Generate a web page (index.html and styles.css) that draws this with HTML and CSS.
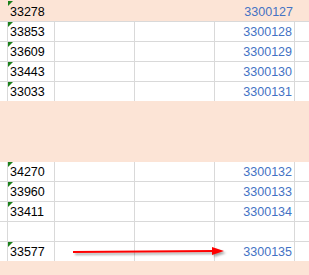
FILE: index.html
```html
<!DOCTYPE html>
<html>
<head>
<meta charset="utf-8">
<link rel="stylesheet" href="styles.css">
</head>
<body>
<div class="sheet">
  <div class="row peach first">
    <div class="cell"></div>
    <div class="cell id"><span class="flag"></span>33278</div>
    <div class="cell"></div>
    <div class="cell"></div>
    <div class="cell num">3300127</div>
    <div class="cell"></div>
  </div>
  <div class="block top">
    <div class="row grid"><div class="cell"></div><div class="cell id"><span class="flag"></span>33853</div><div class="cell"></div><div class="cell"></div><div class="cell num">3300128</div><div class="cell"></div></div>
    <div class="row grid"><div class="cell"></div><div class="cell id"><span class="flag"></span>33609</div><div class="cell"></div><div class="cell"></div><div class="cell num">3300129</div><div class="cell"></div></div>
    <div class="row grid"><div class="cell"></div><div class="cell id"><span class="flag"></span>33443</div><div class="cell"></div><div class="cell"></div><div class="cell num">3300130</div><div class="cell"></div></div>
    <div class="row grid"><div class="cell"></div><div class="cell id"><span class="flag"></span>33033</div><div class="cell"></div><div class="cell"></div><div class="cell num">3300131</div><div class="cell"></div></div>
  </div>
  <div class="band peach"></div>
  <div class="block bottom">
    <div class="row grid"><div class="cell"></div><div class="cell id"><span class="flag"></span>34270</div><div class="cell"></div><div class="cell"></div><div class="cell num">3300132</div><div class="cell"></div></div>
    <div class="row grid"><div class="cell"></div><div class="cell id"><span class="flag"></span>33960</div><div class="cell"></div><div class="cell"></div><div class="cell num">3300133</div><div class="cell"></div></div>
    <div class="row grid"><div class="cell"></div><div class="cell id"><span class="flag"></span>33411</div><div class="cell"></div><div class="cell"></div><div class="cell num">3300134</div><div class="cell"></div></div>
    <div class="row grid"><div class="cell"></div><div class="cell id"></div><div class="cell"></div><div class="cell"></div><div class="cell num"></div><div class="cell"></div></div>
    <div class="row grid last"><div class="cell"></div><div class="cell id"><span class="flag"></span>33577</div><div class="cell"></div><div class="cell"></div><div class="cell num">3300135</div><div class="cell"></div></div>
  </div>
  <div class="band peach tail"></div>
  <svg class="arrow" width="309" height="275" viewBox="0 0 309 275">
    <line x1="73" y1="252" x2="214" y2="251" stroke="#ff0000" stroke-width="2"/>
    <polygon points="212,247 224,251 212,255" fill="#ff0000"/>
  </svg>
</div>
</body>
</html>
```
FILE: styles.css
```css
* { box-sizing: border-box; }
html, body { margin: 0; padding: 0; background: #ffffff; }
.sheet {
  position: relative;
  width: 309px;
  height: 275px;
  overflow: hidden;
  font-family: "Liberation Sans", Arial, sans-serif;
  font-size: 12.5px;
  color: #000000;
}
.row {
  display: grid;
  grid-template-columns: 8px 47px 80px 80px 80px 14px;
  height: 20px;
}
.peach { background: #fce4d6; }
.row.first { height: 21px; }
.cell {
  position: relative;
  padding-top: 2px;
  line-height: 17px;
  white-space: nowrap;
}
.row.first .cell { padding-top: 4px; }
.grid .cell:not(:last-child) { border-right: 1px solid #d9d9d9; }
.top .row { border-top: 1px solid #d9d9d9; }
.bottom .row { border-bottom: 1px solid #d9d9d9; }
.bottom .row.last { border-bottom: none; height: 19px; }
.id { padding-left: 2px; }
.num { text-align: right; padding-right: 2px; color: #4472c4; }
.flag {
  position: absolute;
  top: 0;
  left: 0;
  width: 5px;
  height: 5px;
  background: #1a7f1a;
  clip-path: polygon(0 0, 100% 0, 0 100%);
}
.row.first .flag { top: 1px; }
.band { height: 61px; }
.band.tail { height: 14px; }
.arrow {
  position: absolute;
  left: 0;
  top: 0;
  pointer-events: none;
  filter: drop-shadow(2px 2px 1px rgba(0, 0, 0, 0.35));
}
```
